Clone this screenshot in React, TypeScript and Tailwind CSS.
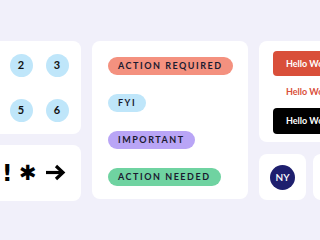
export default function App() {
  const badges = [
    { label: "ACTION REQUIRED", color: "bg-[#f4917f]" },
    { label: "FYI", color: "bg-[#bfe6fa]" },
    { label: "IMPORTANT", color: "bg-[#b9a5f6]" },
    { label: "ACTION NEEDED", color: "bg-[#6fd3a1]" },
  ];

  return (
    <div className="w-[320px] h-[240px] overflow-hidden bg-[#f1f0fa] flex items-start gap-[11px] pt-[41px] font-['Lato',sans-serif]">
      {/* left column */}
      <div className="flex flex-col gap-[11px] w-[120px] -ml-[39px] shrink-0">
        <div className="bg-white rounded-lg h-[93px] flex flex-col justify-center gap-[22px]">
          {[
            ["1", "2", "3"],
            ["4", "5", "6"],
          ].map((row, i) => (
            <div key={i} className="flex justify-center gap-[13px]">
              {row.map((n) => (
                <div
                  key={n}
                  className="w-[23px] h-[23px] rounded-full bg-[#bfe6fa] flex items-center justify-center text-[11px] font-bold text-[#111]"
                >
                  {n}
                </div>
              ))}
            </div>
          ))}
        </div>
        <div className="bg-white rounded-lg h-[56px] flex items-center pl-[41px] text-black font-['DejaVu_Sans',sans-serif] font-bold">
          <span className="text-[23px] leading-none w-[17px]">!</span>
          <span className="text-[21px] leading-none w-[26px]">✱</span>
          <svg width="21" height="17" viewBox="0 0 21 17" className="-mt-[1px]">
            <path d="M1 8.5H18" stroke="black" strokeWidth="3.2" />
            <path d="M11 2L18 8.5L11 15" stroke="black" strokeWidth="3.2" fill="none" />
          </svg>
        </div>
      </div>

      {/* badges */}
      <div className="bg-white rounded-lg w-[156px] h-[158px] shrink-0 flex flex-col items-start gap-[19px] pt-[16px] pl-[16px]">
        {badges.map((b) => (
          <div
            key={b.label}
            className={`${b.color} h-[18px] rounded-full px-[10px] flex items-center text-[9px] font-bold tracking-[0.17em] text-[#1b1b30]`}
          >
            {b.label}
          </div>
        ))}
      </div>

      {/* right column */}
      <div className="flex flex-col gap-[12px] w-[110px] shrink-0">
        <div className="bg-white rounded-lg h-[101px] pt-[10px] pl-[14px] flex flex-col">
          <div className="h-[25px] bg-[#d94f3a] rounded-[4px] flex items-center pl-[13px] text-[9px] font-bold text-white whitespace-nowrap">
            Hello World
          </div>
          <div className="h-[32px] flex items-center pl-[13px] text-[9px] font-bold text-[#d94f3a] whitespace-nowrap">
            Hello World
          </div>
          <div className="h-[26px] bg-black rounded-[4px] flex items-center pl-[13px] text-[9px] font-bold text-white whitespace-nowrap">
            Hello World
          </div>
        </div>
        <div className="flex gap-[7px]">
          <div className="bg-white rounded-lg w-[47px] h-[46px] flex items-center justify-center shrink-0">
            <div className="w-[25px] h-[25px] rounded-full bg-[#1e1f6e] flex items-center justify-center text-white text-[10px] font-semibold">
              NY
            </div>
          </div>
          <div className="bg-white rounded-lg w-[46px] h-[46px] shrink-0" />
        </div>
      </div>
    </div>
  );
}
